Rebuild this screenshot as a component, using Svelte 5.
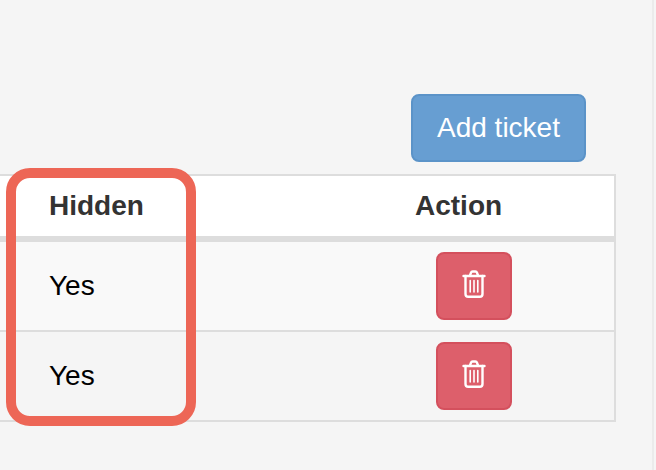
<script>
  let rows = ["Yes", "Yes"];
</script>

<div class="page">
  <div class="toolbar">
    <button class="add-btn">Add ticket</button>
  </div>

  <table>
    <thead>
      <tr>
        <th class="cut"></th>
        <th class="hidden-col">Hidden</th>
        <th>Action</th>
      </tr>
    </thead>
    <tbody>
      {#each rows as row}
        <tr>
          <td class="cut"></td>
          <td class="hidden-col">{row}</td>
          <td>
            <button class="del-btn" aria-label="Delete">
              <svg width="24" height="28" viewBox="0 0 24 28" fill="none" stroke="#fff" stroke-width="2.4" stroke-linecap="round" stroke-linejoin="round">
                <path d="M1.5 6h21" />
                <path d="M8 5.5 9 2.6Q9.4 1.5 10.6 1.5h2.8Q14.600 1.500 15 2.600L16 5.500" />
                <path d="M3.500 6v18q0 2.700 2.700 2.700h11.600q2.700 0 2.700-2.700V6" />
                <path d="M8.200 10.500v11.500M12 10.500v11.500M15.800 10.500v11.500" stroke-width="1.600" />
              </svg>
            </button>
          </td>
        </tr>
      {/each}
    </tbody>
  </table>

  <div class="highlight"></div>
</div>

<style>
  :global(body) {
    margin: 0;
    background: #f5f5f5;
  }

  .page {
    position: relative;
    box-sizing: border-box;
    width: 654px;
    height: 470px;
    padding-top: 94px;
    border-right: 2px solid #ebebeb;
    font-family: "Liberation Sans", Arial, sans-serif;
    overflow: hidden;
  }

  .toolbar {
    display: flex;
    justify-content: flex-end;
    padding-right: 66px;
    margin-bottom: 12px;
  }

  .add-btn {
    box-sizing: border-box;
    width: 175px;
    height: 68px;
    background: #679ed2;
    border: 2px solid #5b93c8;
    border-radius: 8px;
    color: #fff;
    font-family: inherit;
    font-size: 28px;
    padding: 0;
  }

  table {
    box-sizing: border-box;
    width: 616px;
    table-layout: fixed;
    border-collapse: separate;
    border-spacing: 0;
    border-top: 2px solid #ddd;
    border-right: 2px solid #ddd;
    border-bottom: 2px solid #ddd;
  }

  th {
    box-sizing: border-box;
    height: 66px;
    padding: 0 0 0 32px;
    background: #fff;
    border-bottom: 6px solid #ddd;
    color: #333;
    font-size: 28px;
    font-weight: bold;
    text-align: left;
  }

  td {
    box-sizing: border-box;
    height: 90px;
    padding: 0 0 0 32px;
    color: #000;
    font-size: 28px;
    border-bottom: 2px solid #ddd;
  }

  tbody tr:nth-child(1) td {
    background: #f9f9f9;
  }

  tbody tr:last-child td {
    border-bottom: none;
    height: 88px;
  }

  .cut {
    width: 17px;
    padding: 0;
  }

  .hidden-col {
    width: 366px;
  }

  .del-btn {
    display: flex;
    align-items: center;
    justify-content: center;
    box-sizing: border-box;
    width: 76px;
    height: 68px;
    margin-left: 21px;
    padding: 0 0 4px;
    background: #dd5f6b;
    border: 2px solid #d4505d;
    border-radius: 8px;
  }

  .highlight {
    position: absolute;
    left: 6px;
    top: 168px;
    box-sizing: border-box;
    width: 190px;
    height: 258px;
    border: 10px solid #ed6656;
    border-radius: 24px;
  }
</style>
